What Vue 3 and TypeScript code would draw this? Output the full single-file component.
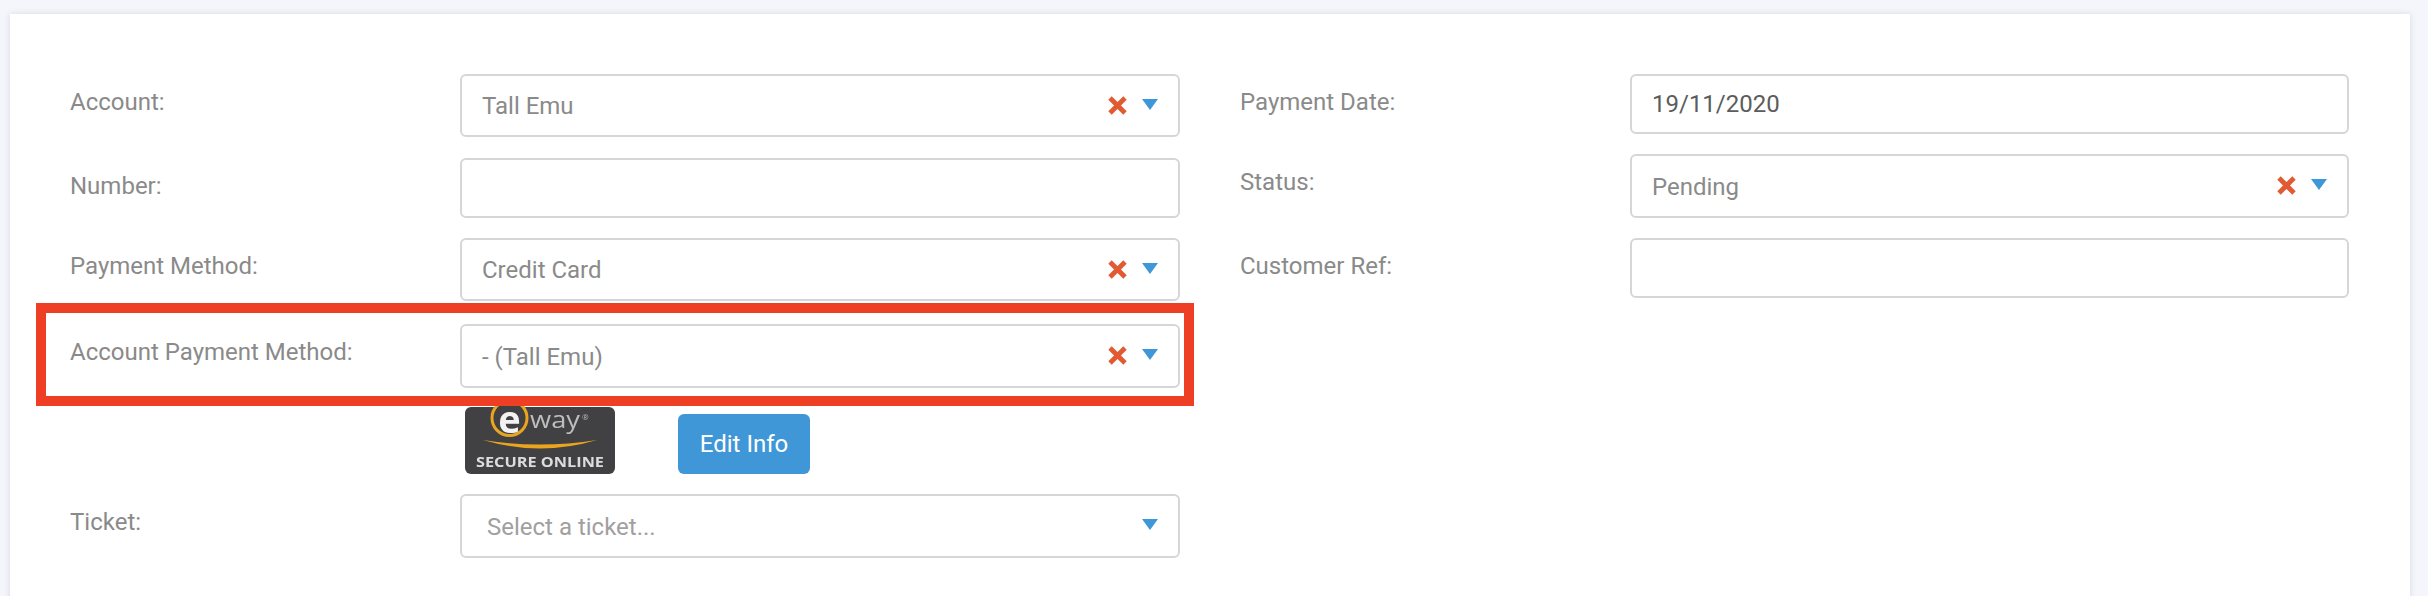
<script setup lang="ts">
interface Field {
  label: string
  value?: string
  placeholder?: string
  type: 'select' | 'input'
  clear?: boolean
  height: number
  gap: number
}

const leftTop: Field[] = [
  { label: 'Account:', value: 'Tall Emu', type: 'select', clear: true, height: 63, gap: 21 },
  { label: 'Number:', type: 'input', height: 60, gap: 20 },
  { label: 'Payment Method:', value: 'Credit Card', type: 'select', clear: true, height: 63, gap: 23 },
  { label: 'Account Payment Method:', value: '- (Tall Emu)', type: 'select', clear: true, height: 64, gap: 19 },
]

const ticket: Field = { label: 'Ticket:', placeholder: 'Select a ticket...', type: 'select', height: 64, gap: 0 }

const right: Field[] = [
  { label: 'Payment Date:', value: '19/11/2020', type: 'input', height: 60, gap: 20 },
  { label: 'Status:', value: 'Pending', type: 'select', clear: true, height: 64, gap: 20 },
  { label: 'Customer Ref:', type: 'input', height: 60, gap: 0 },
]

const groups = [
  { key: 'left-top', fields: leftTop },
  { key: 'right', fields: right },
]
</script>

<template>
  <div class="page">
    <div class="card">
      <div class="mark"></div>
      <div class="columns">
        <div class="col">
          <div
            v-for="f in groups[0].fields"
            :key="f.label"
            class="row"
            :style="{ marginBottom: f.gap + 'px' }"
          >
            <label class="label">{{ f.label }}</label>
            <div class="control" :class="`control--${f.type}`" :style="{ height: f.height + 'px' }">
              <span class="value">{{ f.value }}</span>
              <svg v-if="f.clear" class="clear" width="19" height="19" viewBox="0 0 19 19">
                <path d="M2 2 17 17M17 2 2 17" stroke="#e25a32" stroke-width="4.8" fill="none" />
              </svg>
              <svg v-if="f.type === 'select'" class="arrow" width="16" height="11" viewBox="0 0 16 11">
                <path d="M0 0H16L8 11Z" fill="#3f97d8" />
              </svg>
            </div>
          </div>

          <div class="row row--gateway">
            <span></span>
            <div class="gateway">
              <svg class="eway" width="150" height="67" viewBox="0 0 150 67">
                <rect width="150" height="67" rx="6" fill="#414042" />
                <circle cx="44.5" cy="11" r="17.5" fill="#414042" stroke="#e9a420" stroke-width="3" />
                <text x="44.5" y="26" class="eway-e">e</text>
                <text x="65" y="21" class="eway-way" textLength="50" lengthAdjust="spacingAndGlyphs">way</text>
                <text x="117" y="13" class="eway-reg">®</text>
                <path d="M18 33Q75 50 132 33Q75 42 18 33Z" fill="#e9a420" />
                <text x="11" y="60" class="eway-secure" textLength="128" lengthAdjust="spacingAndGlyphs">SECURE ONLINE</text>
              </svg>
              <button class="btn" type="button">Edit Info</button>
            </div>
          </div>

          <div class="row">
            <label class="label">{{ ticket.label }}</label>
            <div class="control control--select" :style="{ height: ticket.height + 'px' }">
              <span class="value placeholder">{{ ticket.placeholder }}</span>
              <svg class="arrow" width="16" height="11" viewBox="0 0 16 11">
                <path d="M0 0H16L8 11Z" fill="#3f97d8" />
              </svg>
            </div>
          </div>
        </div>

        <div class="col">
          <div
            v-for="f in groups[1].fields"
            :key="f.label"
            class="row"
            :style="{ marginBottom: f.gap + 'px' }"
          >
            <label class="label">{{ f.label }}</label>
            <div class="control" :class="`control--${f.type}`" :style="{ height: f.height + 'px' }">
              <span class="value" :class="{ 'value--dark': f.type === 'input' }">{{ f.value }}</span>
              <svg v-if="f.clear" class="clear" width="19" height="19" viewBox="0 0 19 19">
                <path d="M2 2 17 17M17 2 2 17" stroke="#e25a32" stroke-width="4.8" fill="none" />
              </svg>
              <svg v-if="f.type === 'select'" class="arrow" width="16" height="11" viewBox="0 0 16 11">
                <path d="M0 0H16L8 11Z" fill="#3f97d8" />
              </svg>
            </div>
          </div>
        </div>
      </div>
    </div>
  </div>
</template>

<style>
html,
body {
  margin: 0;
  background: #f5f6fb;
}
</style>

<style scoped>
.page {
  height: 596px;
  overflow: hidden;
  padding: 14px 18px 0 10px;
  box-sizing: border-box;
  font-family: Roboto, "Liberation Sans", sans-serif;
}
.card {
  position: relative;
  height: 600px;
  padding: 60px 61px 0 60px;
  box-sizing: border-box;
  background: #fff;
  box-shadow: 0 0 6px rgba(60, 70, 110, 0.16);
}
.columns {
  display: grid;
  grid-template-columns: 1110px 1109px;
  column-gap: 60px;
}
.row {
  display: grid;
  grid-template-columns: 390px 1fr;
}
.row--gateway {
  margin-bottom: 20px;
}
.label {
  padding-top: 14px;
  font-size: 24px;
  line-height: 28px;
  color: #8a8a8a;
}
.control {
  display: flex;
  align-items: center;
  padding: 0 20px 0 20px;
  box-sizing: border-box;
  background: #fff;
  border: 2px solid #d6d6d6;
  border-radius: 6px;
}
.value {
  flex: 1;
  font-size: 24px;
  line-height: 28px;
  color: #8a8a8a;
}
.value--dark {
  color: #5c5c5c;
}
.control--select .value {
  padding-top: 1px;
}
.placeholder {
  padding-left: 5px;
  color: #a0a0a0;
}
.clear {
  margin-right: 15px;
  margin-top: -1px;
}
.arrow {
  margin-top: -3px;
}
.gateway {
  display: flex;
  align-items: flex-end;
  padding-left: 5px;
}
.eway {
  display: block;
  flex: none;
  overflow: visible;
  filter: blur(0.5px);
}
.eway-e {
  font-family: "Open Sans", sans-serif;
  font-size: 38px;
  font-weight: 700;
  fill: #f2f2f2;
  text-anchor: middle;
}
.eway-way {
  font-family: "Open Sans", sans-serif;
  font-size: 24px;
  fill: #bdbdbd;
}
.eway-reg {
  font-family: "Open Sans", sans-serif;
  font-size: 8px;
  fill: #bdbdbd;
}
.eway-secure {
  font-family: "Open Sans", sans-serif;
  font-size: 15px;
  font-weight: 700;
  fill: #dcdcdc;
}
.btn {
  width: 132px;
  height: 60px;
  margin-left: 63px;
  padding: 0;
  background: #3f97d8;
  border: none;
  border-radius: 6px;
  color: #fff;
  font-family: inherit;
  font-size: 24px;
}
.mark {
  position: absolute;
  left: 26px;
  top: 289px;
  width: 1158px;
  height: 103px;
  box-sizing: border-box;
  border: 10px solid #ee3f24;
  z-index: 2;
  pointer-events: none;
}
</style>
